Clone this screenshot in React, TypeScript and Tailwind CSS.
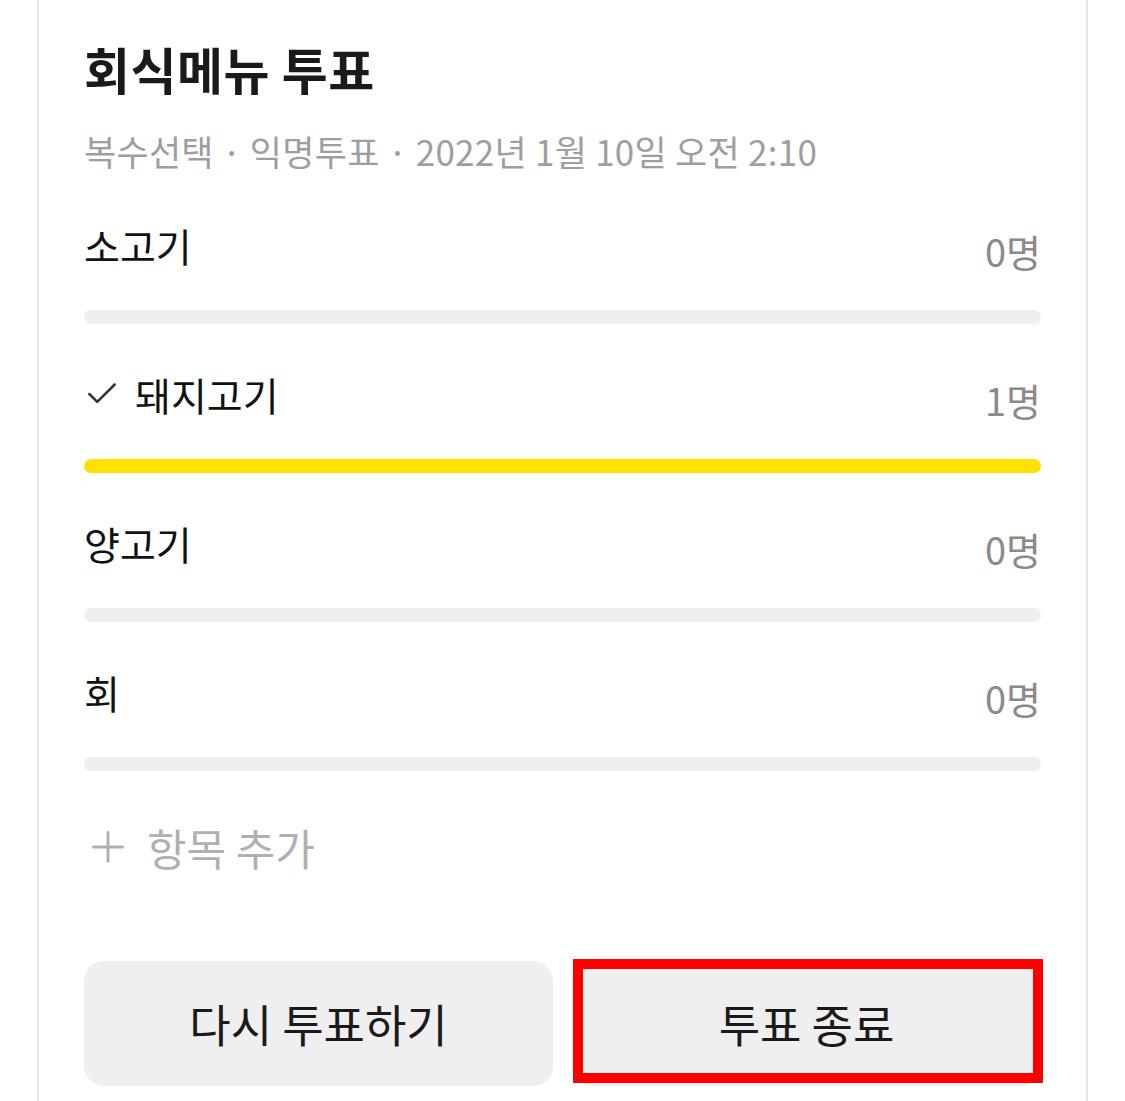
import { Check, Plus } from "lucide-react";

const font = { fontFamily: '"Noto Sans CJK KR", "Noto Sans", sans-serif' };

type Option = { label: string; count: number; voted?: boolean };

const options: Option[] = [
  { label: "소고기", count: 0 },
  { label: "돼지고기", count: 1, voted: true },
  { label: "양고기", count: 0 },
  { label: "회", count: 0 },
];

function OptionRow({ option, first }: { option: Option; first: boolean }) {
  return (
    <div className={first ? "mt-[48px]" : "mt-[46px]"}>
      <div className="flex items-start justify-between">
        <div className="flex items-center">
          {option.voted && (
            <Check size={38} strokeWidth={1.6} className="mr-[14px] -ml-[1px] text-[#333]" />
          )}
          <span className="text-[39px] leading-[48px] text-[#111]">{option.label}</span>
        </div>
        <span className="mt-[6px] text-[38px] leading-[48px] text-[#8a8a8a]">
          {option.count}명
        </span>
      </div>
      <div
        className={
          "mt-[35px] h-[14px] w-full rounded-full " +
          (option.count > 0 ? "bg-[#ffe100]" : "bg-[#efefef]")
        }
      />
    </div>
  );
}

export default function App() {
  return (
    <div className="h-[1101px] w-full overflow-hidden bg-white" style={font}>
      <div className="mx-[37px] -mt-[14px] h-[1200px] rounded-[16px] border-2 border-[#e6e6e6] px-[45px] pt-[52px]">
        <h1 className="text-[50px] font-bold leading-[56px] tracking-[0.5px] text-[#1a1a1a]">
          회식메뉴 투표
        </h1>
        <p className="mt-[33px] text-[35px] leading-[44px] tracking-[0.25px] text-[#9e9e9e]">
          복수선택 · 익명투표 · 2022년 1월 10일 오전 2:10
        </p>

        {options.map((option, i) => (
          <OptionRow key={option.label} option={option} first={i === 0} />
        ))}

        <div className="mt-[51px] flex items-center text-[#b0b0b0]">
          <Plus size={50} strokeWidth={1.4} className="-ml-[1px] mr-[14px]" />
          <span className="text-[43px] leading-[50px]">항목 추가</span>
        </div>

        <div className="mt-[89px] flex gap-[19px]">
          <button
            type="button"
            className="flex h-[125px] flex-1 items-center justify-center rounded-[20px] bg-[#efefef] text-[45px] text-[#1a1a1a]"
          >
            다시 투표하기
          </button>
          <div className="relative flex-1">
            <button
              type="button"
              className="flex h-[125px] w-full items-center justify-center rounded-[20px] bg-[#efefef] text-[45px] text-[#1a1a1a]"
            >
              투표 종료
            </button>
            <div className="pointer-events-none absolute left-[1px] -top-[2px] h-[124px] w-[470px] border-[10px] border-[#ff0000]" />
          </div>
        </div>
      </div>
    </div>
  );
}
